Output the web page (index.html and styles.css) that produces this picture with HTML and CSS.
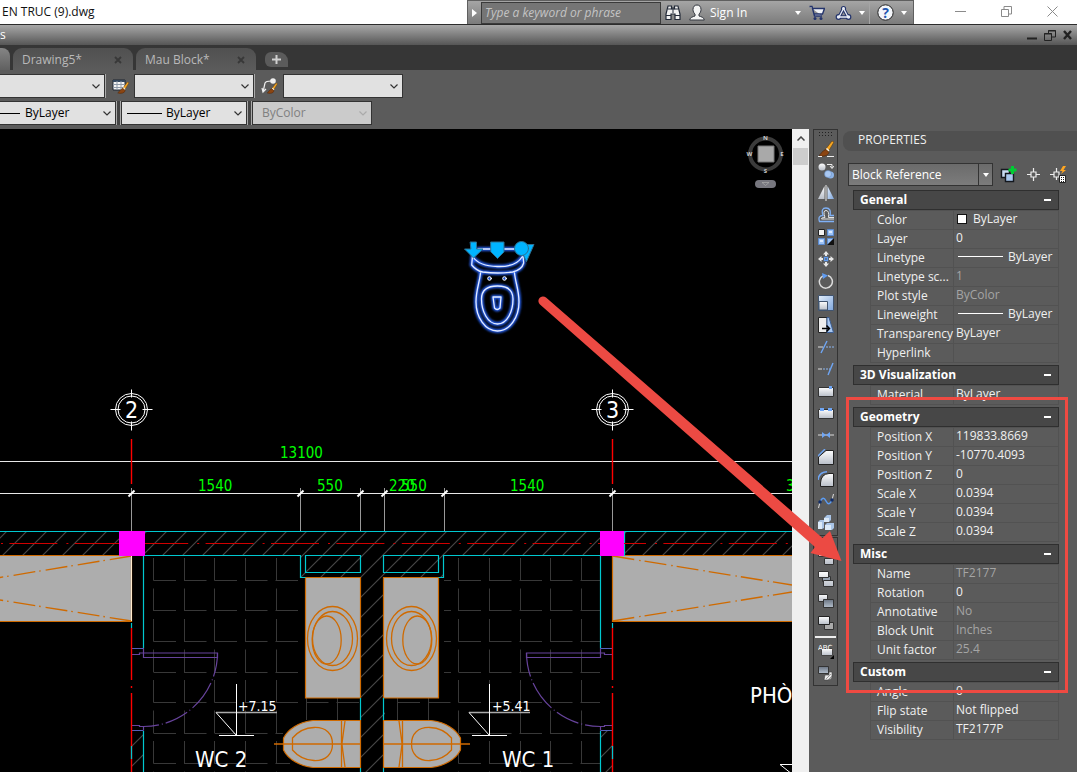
FILE: index.html
```html
<!DOCTYPE html>
<html lang="en">
<head>
<meta charset="utf-8">
<title>KIEN TRUC (9).dwg</title>
<link rel="stylesheet" href="styles.css">
</head>
<body>
<svg class="defs" width="0" height="0" aria-hidden="true">
  <defs>
    <linearGradient id="silver" x1="0" y1="0" x2="0" y2="1"><stop offset="0" stop-color="#fdfdfd"/><stop offset="1" stop-color="#b9bfc9"/></linearGradient>
    <linearGradient id="sky" x1="0" y1="0" x2="1" y2="1"><stop offset="0" stop-color="#e4effc"/><stop offset="1" stop-color="#7fa6dc"/></linearGradient>
    <linearGradient id="steel" x1="0" y1="0" x2="0" y2="1"><stop offset="0" stop-color="#6a7482"/><stop offset="1" stop-color="#b5c0cd"/></linearGradient>
    <symbol id="chevron" viewBox="0 0 8 5"><path d="M.5.5 4 4 7.5.5" fill="none" stroke="currentColor" stroke-width="1.2"/></symbol>
    <symbol id="caret" viewBox="0 0 6 4"><path d="M0 0h6L3 4z" fill="currentColor"/></symbol>
    <symbol id="brush" viewBox="0 0 16 16"><path d="M7 9 14 0l2 1-6 10z" fill="#f5a623" stroke="#5b3a12" stroke-width=".6"/><path d="M8.500 7.500 11 10" stroke="#eee" stroke-width="1.500"/><path d="M8 8.500l3 3c-1 3.500-6 4.500-10 3 2-1 3-5 7-6z" fill="#8b4512" stroke="#4a230a" stroke-width=".6"/></symbol>
  </defs>
</svg>

<header class="titlebar">
  <span class="file-name">EN TRUC (9).dwg</span>
  <div class="infocenter">
    <button class="info-toggle" aria-label="Toggle search"><svg width="5" height="8"><path d="M0 0l5 4-5 4z" fill="#fff"/></svg></button>
    <input class="search" type="text" placeholder="Type a keyword or phrase" aria-label="Search">
    <button class="icon-btn" aria-label="Find"><svg width="16" height="16" viewBox="0 0 16 16"><path d="M3 1h3.500v3h3V1H13l2 8v5.500h-5V9H6v5.500H1V9z" fill="#f1f1f1" stroke="#232a38" stroke-width="1.200"/><path d="M1 10.500h5M10 10.500h5M3 4h3.500M9.500 4H13M8 2v6" stroke="#232a38"/></svg></button>
    <button class="sign-in"><svg width="16" height="17" viewBox="0 0 16 17"><path d="M8 1c2.500 0 4 1.700 4 4.500 0 2-.8 3.500-2 4.500v2c2 .8 5 1.200 5.300 4H.7C1 13.200 4 12.800 6 12v-2C4.800 9 4 7.500 4 5.500 4 2.700 5.500 1 8 1z" fill="#f4f4f4" stroke="#33373f"/></svg><span>Sign In</span><svg class="push" width="6" height="4"><use href="#caret"/></svg></button>
    <button class="icon-btn" aria-label="Store"><svg width="16" height="16" viewBox="0 0 16 16"><path d="M.5 1.500H3L5.500 11H13M3.500 3.500h12l-2 5.500H5" fill="#f1f3f8" stroke="#24346c" stroke-width="1.400"/><circle cx="6" cy="13.500" r="1.500" fill="#24346c"/><circle cx="12" cy="13.500" r="1.500" fill="#24346c"/></svg></button>
    <button class="icon-btn wide" aria-label="Apps"><svg width="17" height="16" viewBox="0 0 17 16"><path d="M8.500 3.500 4 12h9z" fill="none" stroke="#24346c" stroke-width="3.400" stroke-linejoin="round"/><circle cx="8.500" cy="3.500" r="2.600" fill="#24346c"/><circle cx="3.500" cy="12" r="2.900" fill="#24346c"/><circle cx="13.500" cy="12" r="2.900" fill="#24346c"/><path d="M8.500 3.500 4 12h9z" fill="none" stroke="#e9edf5" stroke-width="1.300"/><circle cx="8.500" cy="3.500" r="1.400" fill="#e9edf5"/><circle cx="3.500" cy="12" r="1.700" fill="#e9edf5"/><circle cx="13.500" cy="12" r="1.700" fill="#e9edf5"/></svg><svg width="6" height="4"><use href="#caret"/></svg></button>
    <button class="icon-btn help" aria-label="Help"><svg width="17" height="17" viewBox="0 0 17 17"><circle cx="8.500" cy="8.500" r="7.700" fill="#f4f6fa" stroke="#222"/><text x="8.500" y="13.500" class="help-mark">?</text></svg><svg width="6" height="4"><use href="#caret"/></svg></button>
  </div>
  <div class="window-btns">
    <button aria-label="Minimize"><svg width="11" height="11"><path d="M0 5.500h11" stroke="#8b8b8b"/></svg></button>
    <button aria-label="Restore"><svg width="11" height="11"><path d="M.5 3.500h7v7h-7zM3 3V.5h7.500V8H8" fill="none" stroke="#8b8b8b"/></svg></button>
    <button aria-label="Close"><svg width="11" height="11"><path d="M.5.5l10 10M10.500.5l-10 10" stroke="#8b8b8b"/></svg></button>
  </div>
</header>

<nav class="menubar">
  <span>s</span>
  <div class="doc-btns">
    <button aria-label="Minimize drawing"><svg width="10" height="12"><path d="M0 9.500h10" stroke="#222" stroke-width="2"/></svg></button>
    <button aria-label="Restore drawing"><svg width="12" height="12"><path d="M.5 4.500h7v7h-7zM4.500 4V1.500h7V8H8M0 5h8M4 2h8" fill="none" stroke="#222"/></svg></button>
    <button aria-label="Close drawing"><svg width="9" height="10"><path d="M1 1l7 8M8 1 1 9" stroke="#222" stroke-width="2.400"/></svg></button>
  </div>
</nav>

<div class="tabs">
  <span class="tab-edge"></span>
  <div class="tab"><span>Drawing5*</span><button aria-label="Close Drawing5"><svg width="8" height="8"><path d="M1 1l6 6M7 1 1 7" stroke="#383838" stroke-width="1.800"/></svg></button></div>
  <div class="tab"><span>Mau Block*</span><button aria-label="Close Mau Block"><svg width="8" height="8"><path d="M1 1l6 6M7 1 1 7" stroke="#383838" stroke-width="1.800"/></svg></button></div>
  <button class="tab-new" aria-label="New drawing"><svg width="9" height="9"><path d="M4.500 0v9M0 4.500h9" stroke="#d0d0d0" stroke-width="2"/></svg></button>
</div>

<div class="toolbars">
  <div class="toolbar">
    <span class="combo first-a"><select aria-label="Dimension style"><option></option></select><svg width="8" height="5"><use href="#chevron"/></svg></span>
    <button class="style-btn" aria-label="Table style"><svg width="17" height="16" viewBox="0 0 17 16"><path d="M1 2h12v10H1z" fill="#f4f4f4" stroke="#1f2733"/><path d="M1 3h12" stroke="#33475e" stroke-width="2"/><path d="M1 6.500h12M1 9.500h12M5 3v9M9 3v9" stroke="#8d99a8"/><use href="#brush" x="5" y="4" width="12" height="12"/></svg></button>
    <span class="combo mid"><select aria-label="Table style name"><option></option></select><svg width="8" height="5"><use href="#chevron"/></svg></span>
    <button class="style-btn" aria-label="Multileader style"><svg width="17" height="16" viewBox="0 0 17 16"><path d="M2 14 4 5q1-2 6-2M1 10l1 4 3-3" fill="none" stroke="#eee" stroke-width="1.200"/><circle cx="12" cy="3" r="2.800" fill="#eee"/><use href="#brush" x="5" y="5" width="12" height="11"/></svg></button>
    <span class="combo mid"><select aria-label="Multileader style name"><option></option></select><svg width="8" height="5"><use href="#chevron"/></svg></span>
  </div>
  <div class="toolbar">
    <span class="combo first-b"><select class="lined near" aria-label="Linetype"><option>ByLayer</option></select><svg width="8" height="5"><use href="#chevron"/></svg></span>
    <span class="grip"></span>
    <span class="combo line-b"><select class="lined" aria-label="Lineweight"><option>ByLayer</option></select><svg width="8" height="5"><use href="#chevron"/></svg></span>
    <span class="grip"></span>
    <span class="combo mid off"><select aria-label="Plot style" disabled><option>ByColor</option></select><svg width="8" height="5"><use href="#chevron"/></svg></span>
  </div>
</div>

<main class="workspace">
  <section class="canvas" aria-label="Drawing area">
    <svg class="drawing" viewBox="0 129 792 643" preserveAspectRatio="xMinYMin slice">
      <defs>
        <pattern id="hatch" x="18" y="0" width="20" height="20" patternUnits="userSpaceOnUse"><path d="M-5 25 25-5M-5 5 5-5M15 25 25 15" stroke="#464646" stroke-width="1.200"/></pattern>
        <filter id="glow" x="-20%" y="-20%" width="140%" height="140%"><feGaussianBlur stdDeviation="0.800"/></filter>
        <g id="tick"><path d="M-3 3 3-3" stroke="#fff" stroke-width="2"/></g>
        <g id="axis" fill="none" stroke="#fff"><circle r="16"/><circle r="13.500"/><path d="M0-20v8M0 12v9M-21 0h10M11 0h10"/></g>
        <g id="level"><path d="M216 712.500h61" stroke="#aaa" stroke-width="1.500"/><path d="M236.500 684v51M216 712.500l20.500 23M219 735.500h35" stroke="#fff" fill="none"/></g>
        <g id="half">
          <path d="M305.500 577.500h55V698h-55z" class="fixture"/>
          <g class="outline"><ellipse cx="332.500" cy="638.500" rx="25" ry="32"/><ellipse cx="332.500" cy="638.500" rx="20" ry="27"/><ellipse cx="326.700" cy="640" rx="14.500" ry="24"/></g>
          <path d="M360.500 720.500H313C299 722 288 729 283.500 738v12C288 759 299 766 313 767.500h47.500z" class="fixture"/>
          <path d="M274 744h86.500M341.500 720.500v47M345 721q-3 22-3 23t3 23M292.500 738Q301 728 314 727.500C326 727 332.500 734 332.500 744S326 761 314 760.500Q301 760 292.500 750z" class="outline"/>
          <path d="M143.500 555.500h157v22h5M305.500 555.500h55v17h-55zM360.500 698v22M360.500 768v6M143.500 556v92M143.500 731v42" class="cyan"/>
          <path d="M132 654.500h7.500V653h78v4.500h-74V648M132 725.500h7.500v1h4v4" class="door"/><path d="M217.500 653A74 74 0 0 1 143.500 726.500" class="door" stroke-dasharray="24 3 1 3 31 3 1 3"/>
          <path d="M132 648.500h11.500M132 730.500h11.500" stroke="#5560b8" fill="none"/>
          <path d="M131.500 439v45M131.500 628v52M131.500 686v2M131.500 693v80" stroke="#f00" stroke-width="1.400"/><path d="M131.500 623v5M131.500 746v13" class="cyan"/>
        </g>
        <g id="wc-shape">
          <path d="M478 249h44M472.500 256l-.8 9q5 6 11 7 15 2 30 0 9-2 11-9l-.7-7M473 257q6 9 24.500 9.500T522 257"/>
          <path d="M480.500 273c-1 10-4.500 17-4.500 29 0 15 9 29 21.500 29S519 317 519 302c0-12-3.500-19-4.500-29"/>
          <path d="M497.500 286c-11 0-16 4-16 13 0 12 6 25 16 25s15.500-13 15.500-25c0-9-5-13-15.500-13z"/>
          <path d="M493 297h8l-1 11q-3 3-5.500 0z"/>
        </g>
      </defs>
      <rect x="0" y="129" width="792" height="643" fill="#000"/>
      <g class="tiles">
        <path d="M153.500 558v214M184.500 558v214M214.500 558v214M245.500 558v214M276.500 558v214M458.500 558v214M489.500 558v214M520.500 558v214M550.500 558v214M581.500 558v214M306.500 698v22M337.500 698v22M397.500 698v22M428.500 698v22"/>
        <path d="M153.500 580.500H300M153.500 610.500H300M153.500 641.500H300M153.500 672.500H300M153.500 702.500H360M153.500 733.500H283M153.500 763.500H290M458.500 580.500H600M458.500 610.500H600M458.500 641.500H600M458.500 672.500H600M458.500 702.500H600M458.500 733.500H600M458.500 763.500H600M397.500 702.500h54M444 580.500h7M444 610.500h7M444 641.500h7M444 672.500h7"/>
      </g>
      <path d="M0 532h792v23H444v22h-59v195h-24V577h-60v-22H0zM132 731h11v41h-11zM601 731h11v41h-11z" fill="url(#hatch)"/>
      <path d="M0 555.500h131.500v66H0M792 555.500H612.500v66H792" class="fixture"/>
      <path d="M131.500 556 0 577.500M131.500 621 0 600M612.500 556 792 585M612.500 621 792 592" class="outline" stroke-dasharray="22 5 1.500 4"/>
      <path d="M131.500 556v65" stroke="#ffe9cc"/>
      <path d="M0 461.500h792M0 493.500h792" class="light"/>
      <path d="M131.500 488v43M300.500 488v43M360.500 488v43M384.500 488v43M444.500 488v43M612.500 488v43" class="gray"/>
      <use href="#tick" x="131.500" y="493.500"/><use href="#tick" x="300.500" y="493.500"/><use href="#tick" x="360.500" y="493.500"/><use href="#tick" x="384.500" y="493.500"/><use href="#tick" x="444.500" y="493.500"/><use href="#tick" x="612.500" y="493.500"/>
      <path d="M0 531.500h792M624.500 531v25" class="cyan"/>
      <path d="M-56 543.500h848" stroke="#d00000" stroke-width="1.200" stroke-dasharray="48 9 2 6.400"/>
      <use href="#half"/>
      <use href="#half" transform="matrix(-1 0 0 1 744 0)"/>
      <use href="#level"/><use href="#level" x="253"/>
      <path d="M119 531h26v25h-26zM600 531h24v25h-24z" fill="#f0f"/>
      <use href="#axis" x="131.500" y="409.500"/><use href="#axis" x="612.500" y="409.500"/>
      <g class="cad-text axis-no"><text x="131.500" y="418">2</text><text x="612.500" y="418">3</text></g>
      <g class="cad-text dims"><text x="280" y="458">13100</text><text x="198" y="491">1540</text><text x="317" y="491">550</text><text x="389" y="491">220</text><text x="401" y="491">550</text><text x="510" y="491">1540</text><text x="786" y="491">3</text></g>
      <g class="cad-text levels"><text x="238" y="711">+7.15</text><text x="492" y="711">+5.41</text></g>
      <g class="cad-text rooms"><text x="195" y="767">WC 2</text><text x="502" y="767">WC 1</text><text x="750" y="703">PHÒ</text></g>
      <path d="M780 764.500h12M780 764.500l10 8" stroke="#fff"/>

      <g id="compass">
        <circle cx="765.500" cy="154" r="15.500" fill="none" stroke="#3b3b3b" stroke-width="4"/>
        <path d="M758 146h16v16h-16z" fill="#a9a9a9" stroke="#777"/>
        <rect x="755" y="180" width="21" height="8" rx="4" fill="#77777f"/><path d="M762 182.500h7l-3.500 3z" fill="none" stroke="#aaa" stroke-width=".7"/>
        <g class="compass-letters"><text x="765.500" y="140">N</text><text x="765.500" y="173">S</text><text x="749.500" y="156">W</text><text x="782" y="156">E</text></g>
      </g>

      <g class="wc-block">
        <use href="#wc-shape" class="halo" filter="url(#glow)"/>
        <use href="#wc-shape" class="core"/>
        <circle cx="489.500" cy="278.500" r="1.800" class="hole"/><circle cx="504.500" cy="278.500" r="1.800" class="hole"/>
        <path d="M470.500 242h6v7h6.500l-9.500 9-9-9h6zM491 242h13v10l-6.500 6.500L491 252zM519 244.500h15l-7.500 17z" class="grip-mark"/><circle cx="521.500" cy="248.500" r="7" class="grip-mark"/>
      </g>
    </svg>
  </section>

  <div class="scrollbar"><button aria-label="Scroll up"><svg width="8" height="5"><path d="M.5 4.500 4 1l3.500 3.500" fill="none" stroke="#444" stroke-width="1.500"/></svg></button><span class="thumb"></span></div>

  <aside class="palette">
    <div class="tool-group">
      <span class="dots"></span>
      <button aria-label="Erase"><svg viewBox="0 0 16 16"><use href="#brush"/><path d="M0 15.500h4M9 15.500h7" stroke="#eee"/></svg></button>
      <button aria-label="Copy"><svg viewBox="0 0 16 16"><circle cx="4" cy="4" r="3.500" fill="url(#silver)"/><circle cx="12.500" cy="12" r="3.500" fill="#8db4e8"/><circle cx="10" cy="11" r="3.500" fill="#a9c8f2" stroke="#5d84bd" stroke-width=".5"/><path d="M9 1.500h5V5M12 3l2 2.500L16 3" fill="none" stroke="#eee"/></svg></button>
      <button aria-label="Mirror"><svg viewBox="0 0 16 16"><path d="M6.500 1v13H0z" fill="url(#silver)"/><path d="M9.500 1v13H16z" fill="url(#sky)"/><path d="M8 0v16" stroke="#eee"/></svg></button>
      <button aria-label="Offset"><svg viewBox="0 0 16 16"><path d="M16 14.500H1.500Q-.5 8.500 5 8.500 2.500 1 8 1t4 7.500h4" fill="none" stroke="#7fb0f5" stroke-width="1.300"/><path d="M16 12H3.500q-.5-1.500 3.500-1.500Q4.500 3.500 8 3.500T10.500 10.500H16" fill="none" stroke="#e5e5e5"/></svg></button>
      <button aria-label="Array"><svg viewBox="0 0 16 16"><path d="M.5.500h6v6h-6z" fill="#f3f3f3" stroke="#222"/><path d="M9.500.500h6v6h-6zM.5 9.500h6v6h-6zM9.500 9.500h6v6h-6z" fill="#9dc3f7" stroke="#5b8bd0"/><path d="M11 3h3M2 12h3" stroke="#dcebff" stroke-width="2"/><path d="M16 9v7H9z" fill="#111"/></svg></button>
      <button aria-label="Move"><svg viewBox="0 0 16 16"><path d="M8 0l3 3.500H9V5H7V3.500H5zM8 16l3-3.500H9V11H7v1.500H5zM0 8l3.500-3v2H5v2H3.500v2zM16 8l-3.500-3v2H11v2h1.500v2z" fill="#e8e8e8"/><path d="M6.500 6.500h3v3h-3z" fill="none" stroke="#5f9bf0" stroke-width="1.400"/></svg></button>
      <button aria-label="Rotate"><svg viewBox="0 0 16 16"><path d="M10 2.500A6.500 6.500 0 1 1 5 2.800" fill="none" stroke="#dcdcdc" stroke-width="1.500"/><path d="M4 0l6 2.500L5 6z" fill="#5f9bf0"/></svg></button>
      <button aria-label="Scale"><svg viewBox="0 0 16 16"><path d="M.5.500h15v15h-15z" fill="url(#sky)" stroke="#41546f"/><path d="M1 6.500h8.500V15H1z" fill="url(#silver)" stroke="#41546f"/></svg></button>
      <button aria-label="Stretch"><svg viewBox="0 0 16 16"><path d="M.5.500H9v15H.5z" fill="#eee" stroke="#222"/><path d="M9 .5h2l4.500 15H9z" fill="#a9c8f2" stroke="#3c5f94"/><path d="M4 11.500h7M8.500 8.500l3 3-3 3" fill="none" stroke="#000" stroke-width="1.500"/></svg></button>
      <button aria-label="Trim"><svg viewBox="0 0 16 16"><path d="M3 14 9 2" stroke="#6fa6f5" stroke-width="1.400"/><path d="M0 8h5" stroke="#ddd"/><path d="M8 8h8" stroke="#8db7f2" stroke-dasharray="2 1"/></svg></button>
      <button aria-label="Extend"><svg viewBox="0 0 16 16"><path d="M10 14 15 2" stroke="#6fa6f5" stroke-width="1.400"/><path d="M0 8h4" stroke="#ddd"/><path d="M5 8h7" stroke="#8db7f2" stroke-dasharray="2 1"/></svg></button>
      <button aria-label="Break at point"><svg viewBox="0 0 16 16"><path d="M.5 4.500h15v9H.5z" fill="url(#silver)" stroke="#333"/><path d="M11 3h3v3h-3z" fill="#6fa6f5"/></svg></button>
      <button aria-label="Break"><svg viewBox="0 0 16 16"><path d="M.5 4.500h15v9H.5z" fill="url(#silver)" stroke="#333"/><path d="M2 3h4v3H2zM10 3h4v3h-4z" fill="#6fa6f5"/></svg></button>
      <button aria-label="Join"><svg viewBox="0 0 16 16"><path d="M0 8h16" stroke="#ddd"/><path d="M4 5l4 3-4 3zM12 5 8 8l4 3z" fill="#6fa6f5"/></svg></button>
      <button aria-label="Chamfer"><svg viewBox="0 0 16 16"><path d="M.5 15.500V8L8 1.500h7.500v14z" fill="url(#silver)" stroke="#222"/><path d="M0 7 7 0" stroke="#6fa6f5" stroke-width="1.400"/></svg></button>
      <button aria-label="Fillet"><svg viewBox="0 0 16 16"><path d="M2.500 15.500V12Q3 3 11 2.500h4.500v13z" fill="url(#silver)" stroke="#222"/><path d="M0 9Q1 1 9 .8" fill="none" stroke="#6fa6f5" stroke-width="1.600"/></svg></button>
      <button aria-label="Blend"><svg viewBox="0 0 16 16"><path d="M.5 15 2 9M15.500 1 14 7" stroke="#ddd"/><path d="M2 9Q5 2 8 8t6-1" fill="none" stroke="#5b9cf5" stroke-width="1.500"/><circle cx="2" cy="9" r="1.700" fill="#112c66"/><circle cx="14" cy="7" r="1.700" fill="#112c66"/></svg></button>
      <button aria-label="Explode"><svg viewBox="0 0 16 16"><path d="M0 7l2-2h4v8l-2 1H0zM6 3l3-3h4v5L11 7H6zM7 10l2-2h7v5l-2 2H7z" fill="#a9c4e6"/><path d="M0 7h4v7H0zM6 3h5v4H6zM7 10h6v5H7z" fill="#dceaf8"/></svg></button>
    </div>
    <div class="tool-group">
      <span class="dots"></span>
      <button aria-label="Bring to front"><svg viewBox="0 0 16 16"><path d="M.5 1.500h9v6h-9zM6.500 9.500h9v6h-9z" fill="url(#silver)" stroke="#333"/></svg></button>
      <button aria-label="Send to back"><svg viewBox="0 0 16 16"><path d="M4.500 5.500h8v5h-8z" fill="#96a3b2" stroke="#333"/><path d="M.5.500h10v6H.5zM5.500 9.500h10v6h-10z" fill="url(#silver)" stroke="#333"/></svg></button>
      <button aria-label="Bring above"><svg viewBox="0 0 16 16"><path d="M.5 1.500h9v7h-9z" fill="url(#silver)" stroke="#333"/><path d="M5.500 6.500h10v8h-10z" fill="url(#steel)" stroke="#333"/></svg></button>
      <button aria-label="Send under"><svg viewBox="0 0 16 16"><path d="M6.500 7.500h9v7h-9z" fill="#aaa" stroke="#333"/><path d="M.5 1.500h11v8H.5z" fill="url(#silver)" stroke="#222"/></svg></button>
      <span class="tool-sep"></span>
      <button aria-label="Text to front"><svg viewBox="0 0 16 16"><path d="M3.500 5.500h11v7h-11z" fill="url(#silver)" stroke="#444"/><text x="0" y="6.500" class="abc">ABC</text><path d="M16 12v4h-4z" fill="#000"/></svg></button>
      <button aria-label="Hatch to back"><svg viewBox="0 0 16 16"><path d="M.5 1.500h10v7H.5z" fill="url(#steel)" stroke="#333"/><path d="M7 10h4V7h3v5q-1 3-4 3H6z" fill="#eee" stroke="#444" stroke-width=".6"/><path d="M8 14l5-5M10 15l4-4" stroke="#777" stroke-width=".7"/></svg></button>
    </div>
  </aside>

  <section class="properties">
    <h2>PROPERTIES</h2>
    <div class="selector">
      <span class="combo object-type"><select aria-label="Object type"><option>Block Reference</option></select><i><svg width="6" height="4"><use href="#caret"/></svg></i></span>
      <button aria-label="Toggle pickadd"><svg width="17" height="17" viewBox="0 0 17 17"><path d="M1.500 3.500h8v8h-8z" fill="#c9dcf3" stroke="#14181f" stroke-width="1.400"/><path d="M5.500 7.500h8v8h-8z" fill="#a9c8ef" stroke="#14181f" stroke-width="1.400"/><path d="M12.500 0v8M8.500 4h8" stroke="#0c3" stroke-width="3"/></svg></button>
      <button aria-label="Select objects"><svg width="13" height="13"><path d="M6.500 0v4M6.500 9v4M0 6.500h4M9 6.500h4M4 4h5v5H4z" fill="none" stroke="#eee" stroke-width="1.200"/></svg></button>
      <button aria-label="Quick select"><svg width="17" height="17" viewBox="0 0 17 17"><path d="M6.500 2v4M6.500 11v3M0 8.500h4M4 6h5v5H4z" fill="none" stroke="#eee" stroke-width="1.200"/><path d="M13 0l-3 5h2.500L11 8l5-4h-2.500L16 0z" fill="#ffa621"/><path d="M9.500 9.500h6v7h-6z" fill="#fff" stroke="#222"/><path d="M11 11.500h1M13 11.500h1M11 13.500h1M13 13.500h1M11 15.500h1M13 15.500h1" stroke="#222"/></svg></button>
    </div>
    <div class="groups">
      <section class="group"><h3><button>General<i></i></button></h3>
        <table>
          <tr><th>Color</th><td><span class="swatch"></span>ByLayer</td></tr>
          <tr><th>Layer</th><td>0</td></tr>
          <tr><th>Linetype</th><td><span class="rule"></span>ByLayer</td></tr>
          <tr><th>Linetype sc...</th><td class="muted">1</td></tr>
          <tr><th>Plot style</th><td class="muted">ByColor</td></tr>
          <tr><th>Lineweight</th><td><span class="rule"></span>ByLayer</td></tr>
          <tr><th>Transparency</th><td>ByLayer</td></tr>
          <tr><th>Hyperlink</th><td></td></tr>
        </table></section>
      <section class="group"><h3><button>3D Visualization<i></i></button></h3>
        <table><tr><th>Material</th><td>ByLayer</td></tr></table></section>
      <section class="group"><h3><button>Geometry<i></i></button></h3>
        <table>
          <tr><th>Position X</th><td>119833.8669</td></tr>
          <tr><th>Position Y</th><td>-10770.4093</td></tr>
          <tr><th>Position Z</th><td>0</td></tr>
          <tr><th>Scale X</th><td>0.0394</td></tr>
          <tr><th>Scale Y</th><td>0.0394</td></tr>
          <tr><th>Scale Z</th><td>0.0394</td></tr>
        </table></section>
      <section class="group"><h3><button>Misc<i></i></button></h3>
        <table>
          <tr><th>Name</th><td class="muted">TF2177</td></tr>
          <tr><th>Rotation</th><td>0</td></tr>
          <tr><th>Annotative</th><td class="muted">No</td></tr>
          <tr><th>Block Unit</th><td class="muted">Inches</td></tr>
          <tr><th>Unit factor</th><td class="muted">25.4</td></tr>
        </table></section>
      <section class="group"><h3><button>Custom<i></i></button></h3>
        <table>
          <tr><th>Angle</th><td>0</td></tr>
          <tr><th>Flip state</th><td>Not flipped</td></tr>
          <tr><th>Visibility</th><td>TF2177P</td></tr>
        </table></section>
      <div class="highlight"></div>
    </div>
  </section>

  <svg class="pointer" width="320" height="280" viewBox="530 290 320 280" aria-hidden="true">
    <path d="M540 304.500a4.500 4.500 0 1 1 6-7L822.500 538l7.500-7 11.500 30-31-8 4.500-6z" fill="#ec4a43"/>
  </svg>
</main>
</body>
</html>
```
FILE: styles.css
```css
* { box-sizing: border-box; }
body {
  margin: 0;
  min-height: 100vh;
  display: flex;
  flex-direction: column;
  background: #5b5b5b;
  font: 12px/16px "Open Sans", "Noto Sans", sans-serif;
  color: #f0f0f0;
  overflow: hidden;
}
button {
  border: 0;
  padding: 0;
  background: none;
  color: inherit;
  font: inherit;
  display: flex;
  align-items: center;
  justify-content: center;
}
svg { display: block; flex: none; }
.defs { position: absolute; }
select, input { font: inherit; margin: 0; border-radius: 0; }

/* Title bar */
.titlebar { display: flex; height: 24px; background: #fff; color: #111; }
.file-name { flex: 1; padding: 4px 2px; }
.infocenter {
  display: flex;
  align-items: center;
  width: 447px;
  background: linear-gradient(#a5a5a5, #7b7b7b);
  border: 1px solid #5f5f5f;
  border-width: 1px 1px 0;
  color: #fff;
}
.info-toggle { width: 13px; height: 23px; }
.search {
  width: 180px;
  height: 22px;
  padding: 0 3px;
  background: #757575;
  border: 1px solid #3a3a3a;
  color: #fff;
}
.search::placeholder { color: #c4c4c4; font-style: italic; opacity: 1; }
.icon-btn { width: 24px; height: 23px; gap: 7px; }
.icon-btn.wide { width: 40px; padding-left: 2px; }
.icon-btn.help { width: 36px; flex: 1; border-left: 1px solid #a5a5a5; }
.help-mark { font: bold 14px "Open Sans", sans-serif; fill: #2256b0; text-anchor: middle; }
.sign-in { width: 120px; height: 23px; padding: 0 4px; gap: 5px; justify-content: flex-start; }
.push { margin-left: auto; }
.window-btns { display: flex; width: 163px; padding-left: 23px; }
.window-btns button { width: 46px; height: 22px; }

/* Menu bar */
.menubar {
  display: flex;
  justify-content: space-between;
  height: 21px;
  border-top: 1px solid #2c2c2c;
  background: linear-gradient(#a8a8a8, #565656);
  color: #fff;
  line-height: 19px;
}
.doc-btns { display: flex; align-items: center; gap: 7px; padding-right: 5px; }

/* File tabs */
.tabs { display: flex; align-items: flex-end; height: 25px; gap: 3px; background: #363636; color: #b9b9b9; }
.tab-edge { width: 10px; height: 22px; background: linear-gradient(#858585, #606060); border-radius: 0 8px 0 0; }
.tab {
  display: flex;
  align-items: center;
  justify-content: space-between;
  width: 120px;
  height: 22px;
  padding: 2px 11px 0 9px;
  background: linear-gradient(#505050, #5b5b5b);
  border-radius: 9px 9px 0 0;
}
.tab-new { width: 23px; height: 15px; margin: 0 0 3px 6px; background: #5b5b5b; border-radius: 6px 9px 0 6px; }

/* Style toolbars */
.toolbars { display: flex; flex-direction: column; gap: 3px; height: 59px; padding-top: 4px; }
.toolbar { display: flex; height: 24px; }
.combo { display: grid; align-items: center; border: 1px solid #333; background: #e1e1e1; color: #333; }
.combo > * { grid-area: 1 / 1; }
.combo > svg { justify-self: end; margin-right: 4px; pointer-events: none; }
.combo select {
  appearance: none;
  width: 100%;
  height: 100%;
  border: 0;
  padding: 0 9px;
  background: none;
  color: #000;
}
.combo.mid { width: 120px; }
.combo.first-a { width: 105px; border-left: 0; }
.combo.first-b { width: 116px; border-left: 0; }
.combo.line-b { width: 126px; }
.combo.off { background: #cbcbcb; color: #aaa; }
.combo.off select { color: #808080; opacity: 1; }
.combo .lined { padding-left: 44px; background: linear-gradient(#000, #000) 5px 50% / 35px 1px no-repeat; }
.combo .near { padding-left: 25px; background-position: -15px 50%; }
.style-btn { width: 29px; border-left: 1px solid #aaa; }
.grip { width: 5px; border-left: 1px solid #aaa; border-right: 1px solid #aaa; background: #444; }

/* Workspace */
.workspace { position: relative; flex: 1; display: flex; min-height: 0; }
.canvas { flex: 1; min-width: 0; background: #000; overflow: hidden; }
.drawing { width: 100%; height: 100%; }
.tiles { fill: none; stroke: #383838; stroke-dasharray: 22.5 8; }
.cyan { fill: none; stroke: #00c8d0; stroke-width: 1.2; }
.fixture { fill: #adadad; stroke: #cf6a00; stroke-width: 1.2; }
.outline { fill: none; stroke: #cf6a00; stroke-width: 1.3; }
.door { fill: none; stroke: #67439c; stroke-width: 1.2; }
.gray { fill: none; stroke: #999; }
.light { stroke: #e8e8e8; }
.cad-text { font-family: "DejaVu Sans Condensed", "Noto Sans", sans-serif; fill: #fff; }
.axis-no { font-size: 23px; text-anchor: middle; }
.dims { font-size: 15px; fill: #0f0; }
.levels { font-size: 14px; }
.rooms { font-size: 22px; }
.compass-letters { font: bold 6px "Open Sans", sans-serif; fill: #ccc; text-anchor: middle; }
.wc-block { fill: none; stroke-linecap: round; stroke-linejoin: round; }
.halo { stroke: #2660f0; stroke-width: 4; }
.core { stroke: #e4ecff; stroke-width: 1.3; }
.hole { stroke: #fff; fill: #1d50cc; }
.grip-mark { fill: #00b4ff; stroke: #2c6f90; stroke-width: 1; }

.scrollbar { width: 17px; background: #f0f0f0; display: flex; flex-direction: column; align-items: center; }
.scrollbar button { width: 17px; height: 19px; }
.thumb { width: 15px; height: 17px; background: #cdcdcd; }

.palette { width: 29px; padding-left: 4px; }
.tool-group { border: 1px solid #333; padding-bottom: 1px; margin-bottom: 1px; }
.dots { display: block; height: 8px; padding: 1px 4px; background: radial-gradient(#222 1px, transparent 1px) 0 0 / 3px 3px content-box repeat; }
.tool-group button { width: 100%; height: 22px; }
.tool-group button svg { width: 16px; height: 16px; }
.tool-sep { display: block; height: 2px; margin: 2px 1px; background: #eee; }
.abc { font: 7px "DejaVu Sans", sans-serif; fill: #fff; }

/* Properties palette */
.properties { width: 239px; padding: 2px 0 0 5px; }
.properties h2 { margin: 0; padding: 0 15px; height: 20px; font-size: 12px; font-weight: 400; line-height: 18px; background: #505050; border-radius: 8px 0 0 8px; }
.selector { display: flex; align-items: center; margin: 12px 0 4px 5px; height: 23px; }
.selector button { width: 25px; }
.object-type { width: 145px; height: 23px; margin-right: 3px; background: linear-gradient(#6b6b6b, #7c7c7c); }
.combo.object-type select { color: #fff; padding: 0 3px; }
.object-type i { justify-self: end; display: grid; place-items: center; width: 14px; height: 100%; border-left: 1px solid #333; color: #fff; pointer-events: none; }
.groups { position: relative; margin: 0 18px 0 10px; }
.group { margin-bottom: 2px; }
.group h3 { margin: 0; font-size: 12px; }
.group h3 button {
  width: 100%;
  height: 20px;
  justify-content: space-between;
  padding: 0 7px 0 6px;
  background: #474747;
  border: 1px solid #2f2f2f;
  color: #fff;
  font-weight: 700;
}
.group h3 i { width: 7px; height: 2px; background: #fff; }
table { width: calc(100% - 17px); margin-left: 17px; border-collapse: collapse; table-layout: fixed; }
th, td { height: 19px; padding: 0; border: 1px solid #525252; line-height: 16px; text-align: left; font-weight: 400; white-space: nowrap; }
th { width: 83px; padding-left: 6px; }
td { padding: 0 0 2px 2px; }
.muted { color: #a5a5a5; }
.swatch { display: inline-block; width: 10px; height: 10px; margin: 0 6px 0 1px; background: #fff; border: 1px solid #111; vertical-align: -1px; }
.rule { display: inline-block; width: 45px; height: 1px; margin: 0 5px 0 2px; background: #fff; vertical-align: 4px; }
.highlight { position: absolute; top: 207px; left: -7px; right: -9px; height: 296px; border: 3px solid #ef4a42; }
.pointer { position: absolute; top: 161px; right: 227px; }
```
